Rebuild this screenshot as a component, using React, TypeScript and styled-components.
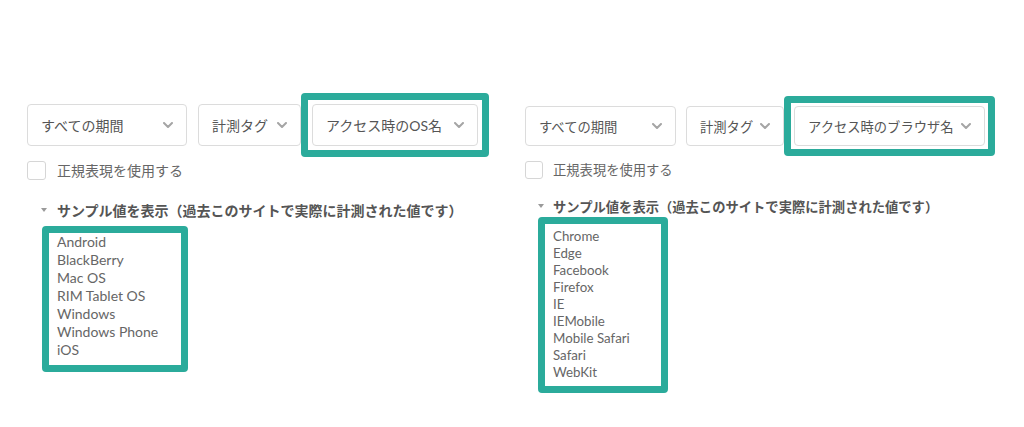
import React from "react";
import styled, { createGlobalStyle } from "styled-components";

const GlobalStyle = createGlobalStyle`
  body {
    margin: 0;
    background: #ffffff;
    font-family: "Lato", "Noto Sans CJK JP", sans-serif;
  }
`

const Page = styled.div`
  display: flex;
  align-items: flex-start;
  width: 1024px;
  height: 427px;
  padding-left: 27px;
  box-sizing: border-box;
  overflow: hidden;
`

const PanelBox = styled.div<{ $width: number; $top: number; $fs: number }>`
  width: ${(p) => p.$width}px;
  margin-top: ${(p) => p.$top}px;
  font-size: ${(p) => p.$fs}px;
  flex-shrink: 0;
`

const SelectRow = styled.div<{ $gap: number }>`
  display: flex;
  align-items: center;
  gap: ${(p) => p.$gap}px;
`

const SelectBox = styled.div<{ $width: number; $height: number }>`
  display: flex;
  align-items: center;
  justify-content: space-between;
  box-sizing: border-box;
  width: ${(p) => p.$width}px;
  height: ${(p) => p.$height}px;
  padding: 0 13px 0 13px;
  border: 1px solid #dcdcdc;
  border-radius: 4px;
  background: #fff;
  color: #555;
  white-space: nowrap;
`

const Highlight = styled.div<{ $pad: number }>`
  position: relative;

  &::after {
    content: "";
    position: absolute;
    inset: ${(p) => -(p.$pad + 7)}px;
    border: 7px solid #2bab9b;
    border-radius: 4px;
    pointer-events: none;
  }
`

const CheckRow = styled.label<{ $top: number; $gap: number }>`
  display: flex;
  align-items: center;
  gap: ${(p) => p.$gap}px;
  margin-top: ${(p) => p.$top}px;
  color: #666;
`

const CheckBox = styled.span<{ $size: number }>`
  display: inline-block;
  box-sizing: border-box;
  width: ${(p) => p.$size}px;
  height: ${(p) => p.$size}px;
  border: 1px solid #d6d6d6;
  border-radius: 3px;
  background: #fff;
`

const SampleHeader = styled.div<{ $top: number; $indent: number; $gap: number }>`
  display: flex;
  align-items: center;
  gap: ${(p) => p.$gap}px;
  margin-top: ${(p) => p.$top}px;
  padding-left: ${(p) => p.$indent}px;
  font-weight: 700;
  color: #555;
  line-height: 20px;
  white-space: nowrap;
`

const Triangle = styled.span`
  width: 0;
  height: 0;
  border-left: 3px solid transparent;
  border-right: 3px solid transparent;
  border-top: 4px solid #9a9a9a;
  margin-top: -3px;
`

const ListWrap = styled.div<{ $top: number; $indent: number }>`
  margin-top: ${(p) => p.$top}px;
  margin-left: ${(p) => p.$indent}px;
  display: inline-block;
`

const SampleList = styled.ul<{ $width: number; $height: number; $lh: number; $padTop: number }>`
  list-style: none;
  margin: 0;
  box-sizing: border-box;
  width: ${(p) => p.$width}px;
  height: ${(p) => p.$height}px;
  padding: ${(p) => p.$padTop}px 0 0 8px;
  line-height: ${(p) => p.$lh}px;
  color: #666;
`

const Chevron: React.FC<{ size: number }> = ({ size }) => (
  <svg width={size} height={size * 0.6} viewBox="0 0 10 6" style={{ flexShrink: 0 }}>
    <polyline
      points="1,1 5,5 9,1"
      fill="none"
      stroke="#a5a5a5"
      strokeWidth="2"
      strokeLinecap="round"
      strokeLinejoin="round"
    />
  </svg>
)

type PanelConfig = {
  width: number
  top: number
  fs: number
  selectHeight: number
  selectWidths: number[]
  selectGap: number
  lastSelect: string
  framePad: number
  checkSize: number
  checkTop: number
  checkGap: number
  headerTop: number
  headerIndent: number
  headerGap: number
  listTop: number
  listIndent: number
  listWidth: number
  listHeight: number
  listLh: number
  listPadTop: number
  items: string[]
}

const Panel: React.FC<{ c: PanelConfig }> = ({ c }) => {
  const labels = ["すべての期間", "計測タグ", c.lastSelect]
  return (
    <PanelBox $width={c.width} $top={c.top} $fs={c.fs}>
      <SelectRow $gap={c.selectGap}>
        {labels.map((label, i) => {
          const box = (
            <SelectBox key={label} $width={c.selectWidths[i]} $height={c.selectHeight}>
              <span>{label}</span>
              <Chevron size={10} />
            </SelectBox>
          )
          return i === 2 ? (
            <Highlight key={label} $pad={c.framePad}>
              {box}
            </Highlight>
          ) : (
            box
          )
        })}
      </SelectRow>
      <CheckRow $top={c.checkTop} $gap={c.checkGap}>
        <CheckBox $size={c.checkSize} />
        <span>正規表現を使用する</span>
      </CheckRow>
      <SampleHeader $top={c.headerTop} $indent={c.headerIndent} $gap={c.headerGap}>
        <Triangle />
        <span>サンプル値を表示（過去このサイトで実際に計測された値です）</span>
      </SampleHeader>
      <ListWrap $top={c.listTop} $indent={c.listIndent}>
        <Highlight $pad={0}>
          <SampleList
            $width={c.listWidth}
            $height={c.listHeight}
            $lh={c.listLh}
            $padTop={c.listPadTop}
          >
            {c.items.map((item) => (
              <li key={item}>{item}</li>
            ))}
          </SampleList>
        </Highlight>
      </ListWrap>
    </PanelBox>
  )
}

const osPanel: PanelConfig = {
  width: 498,
  top: 104,
  fs: 14,
  selectHeight: 42,
  selectWidths: [160, 103, 166],
  selectGap: 11,
  lastSelect: "アクセス時のOS名",
  framePad: 4,
  checkSize: 19,
  checkTop: 14,
  checkGap: 11,
  headerTop: 21,
  headerIndent: 14,
  headerGap: 10,
  listTop: 12,
  listIndent: 22,
  listWidth: 132,
  listHeight: 132,
  listLh: 18,
  listPadTop: 0,
  items: [
    "Android",
    "BlackBerry",
    "Mac OS",
    "RIM Tablet OS",
    "Windows",
    "Windows Phone",
    "iOS"
  ]
}

const browserPanel: PanelConfig = {
  width: 480,
  top: 106,
  fs: 13.3,
  selectHeight: 40,
  selectWidths: [151, 98, 191],
  selectGap: 10,
  lastSelect: "アクセス時のブラウザ名",
  framePad: 3,
  checkSize: 18,
  checkTop: 14,
  checkGap: 10,
  headerTop: 18,
  headerIndent: 13,
  headerGap: 9,
  listTop: 7,
  listIndent: 20,
  listWidth: 116,
  listHeight: 162,
  listLh: 17,
  listPadTop: 4,
  items: [
    "Chrome",
    "Edge",
    "Facebook",
    "Firefox",
    "IE",
    "IEMobile",
    "Mobile Safari",
    "Safari",
    "WebKit"
  ]
}

const App: React.FC = () => {
  return (
    <>
      <GlobalStyle />
      <Page>
        <Panel c={osPanel} />
        <Panel c={browserPanel} />
      </Page>
    </>
  )
}

export default App
